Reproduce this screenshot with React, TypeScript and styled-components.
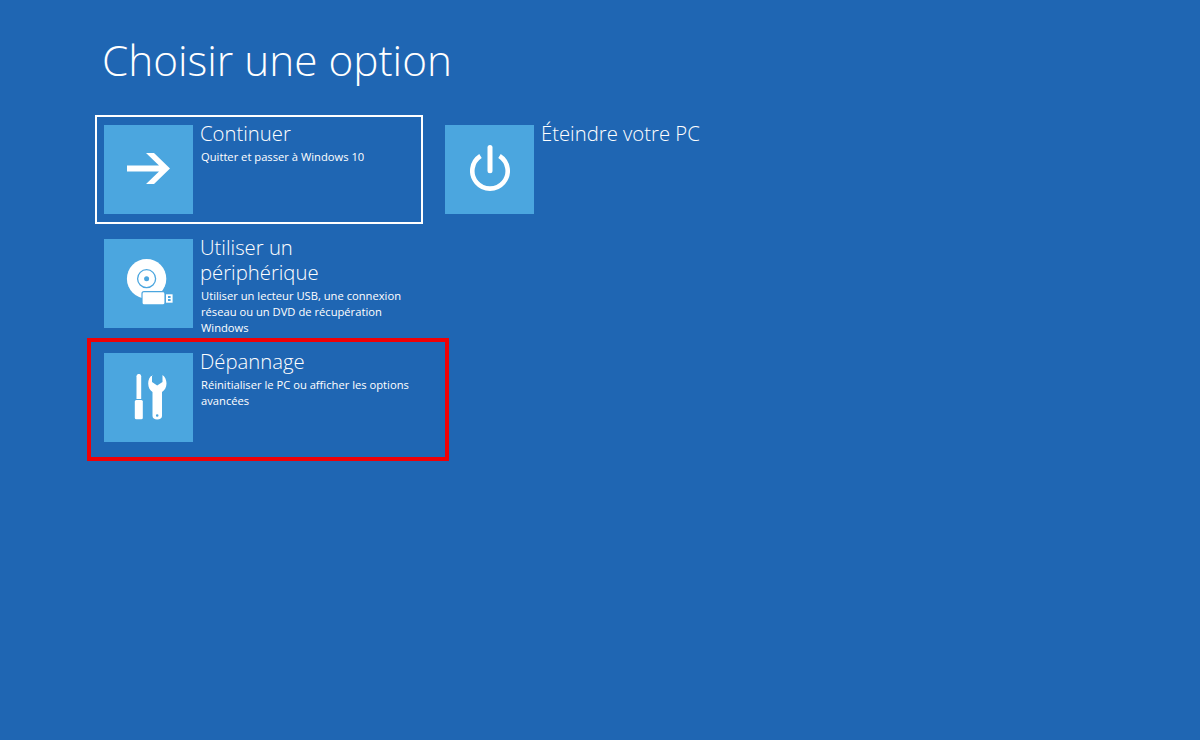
import React from 'react';
import styled, { createGlobalStyle } from 'styled-components';

const TILE_COLOR = '#4ba6df';

const GlobalStyle = createGlobalStyle`
  html, body {
    margin: 0;
    padding: 0;
    height: 100%;
    background: #1f66b3;
    overflow: hidden;
  }
`;

const Page = styled.div`
  width: 1200px;
  height: 740px;
  box-sizing: border-box;
  padding: 31px 0 0 95px;
  background: #1f66b3;
  color: #fff;
  font-family: 'Open Sans', 'Liberation Sans', sans-serif;
`;

const Heading = styled.h1`
  margin: 0 0 26px 7px;
  height: 58px;
  font-size: 42.3px;
  line-height: 58px;
  font-weight: 300;
`;

const Options = styled.div`
  display: grid;
  grid-template-columns: 328px 328px;
  grid-auto-rows: 109px;
  column-gap: 13px;
  row-gap: 5px;
`;

const Card = styled.div<{ $focused?: boolean; $flagged?: boolean }>`
  position: relative;
  display: flex;
  box-sizing: border-box;
  gap: 7px;
  padding: 8px 7px;
  border: 2px solid ${({ $focused }) => ($focused ? '#fff' : 'transparent')};

  ${({ $flagged }) =>
    $flagged &&
    `
    &::after {
      content: '';
      position: absolute;
      left: -10px;
      top: -7px;
      width: 354px;
      height: 115px;
      border: 4px solid #f00006;
    }
  `}
`;

const Tile = styled.div`
  flex: none;
  display: flex;
  align-items: center;
  justify-content: center;
  width: 89px;
  height: 89px;
  background: ${TILE_COLOR};
`;

const Body = styled.div`
  min-width: 0;
  margin-top: -4px;
`;

const Title = styled.div`
  font-size: 20.3px;
  line-height: 25px;
  font-weight: 300;
`;

const Description = styled.div`
  margin-top: 3px;
  padding-left: 1px;
  font-size: 11.2px;
  line-height: 16px;
  font-weight: 400;
`;

const ArrowIcon = () => (
  <svg width="43" height="33" viewBox="0 0 43 33" fill="#fff">
    <path d="M19 0h8l16 15.500L27 31h-8l13-12.500H0v-6h32z" />
  </svg>
);

const DiscIcon = () => (
  <svg width="48" height="49" viewBox="-2 0 48 49">
    <circle cx="19.600" cy="19.700" r="19.700" fill="#fff" />
    <circle cx="19.600" cy="19.700" r="9" fill="none" stroke={TILE_COLOR} strokeWidth="1.300" />
    <circle cx="19.600" cy="19.700" r="2.500" fill={TILE_COLOR} />
    <rect x="15" y="32.700" width="23" height="13.200" rx="2" fill="#fff" stroke={TILE_COLOR} strokeWidth="1.200" />
    <rect x="39" y="35.300" width="6.600" height="8.400" fill="#fff" />
    <rect x="41" y="37" width="2.600" height="2" fill={TILE_COLOR} />
    <rect x="41" y="40" width="2.600" height="2" fill={TILE_COLOR} />
  </svg>
);

const ToolsIcon = () => (
  <svg width="36" height="48" viewBox="-3.500 0 36 48" fill="#fff">
    <path d="M2 2.300a2.300 2.300 0 0 1 4.700 0V25H2z" />
    <rect x="0.300" y="26" width="8" height="19.300" rx="1.500" />
    <path
      fillRule="evenodd"
      d="M17.500 1v7l5.200 3.500L28 8V1c2.500 1.500 4 5 4 8.500 0 4-2 7-4.500 8.500v24c0 2-1.900 3.500-4.800 3.500-2.700 0-4.700-1.500-4.700-3.500V18c-2.500-1.500-4.300-4.500-4.300-8.500 0-3.500 1.300-7 4.300-8.500zM22.700 40.200a1.300 1.300 0 1 0 0 2.600 1.300 1.300 0 0 0 0-2.600z"
    />
  </svg>
);

const PowerIcon = () => (
  <svg width="40" height="49" viewBox="0 0 40 49" fill="none" stroke="#fff" strokeWidth="4.600">
    <path d="M20 2.500v23.300" strokeWidth="5" strokeLinecap="round" />
    <path d="M10.500 11A17.700 17.700 0 1 0 29.500 11" />
  </svg>
);

const options = [
  {
    title: 'Continuer',
    description: 'Quitter et passer à Windows 10',
    icon: <ArrowIcon />,
    focused: true,
  },
  {
    title: 'Éteindre votre PC',
    icon: <PowerIcon />,
  },
  {
    title: 'Utiliser un périphérique',
    description: 'Utiliser un lecteur USB, une connexion réseau ou un DVD de récupération Windows',
    icon: <DiscIcon />,
  },
  { spacer: true },
  {
    title: 'Dépannage',
    description: 'Réinitialiser le PC ou afficher les options avancées',
    icon: <ToolsIcon />,
    flagged: true,
  },
];

export default function App() {
  return (
    <Page>
      <GlobalStyle />
      <Heading>Choisir une option</Heading>
      <Options>
        {options.map((option, index) =>
          option.spacer ? (
            <div key={index} />
          ) : (
            <Card key={option.title} $focused={option.focused} $flagged={option.flagged}>
              <Tile>{option.icon}</Tile>
              <Body>
                <Title>{option.title}</Title>
                {option.description && <Description>{option.description}</Description>}
              </Body>
            </Card>
          ),
        )}
      </Options>
    </Page>
  );
}
